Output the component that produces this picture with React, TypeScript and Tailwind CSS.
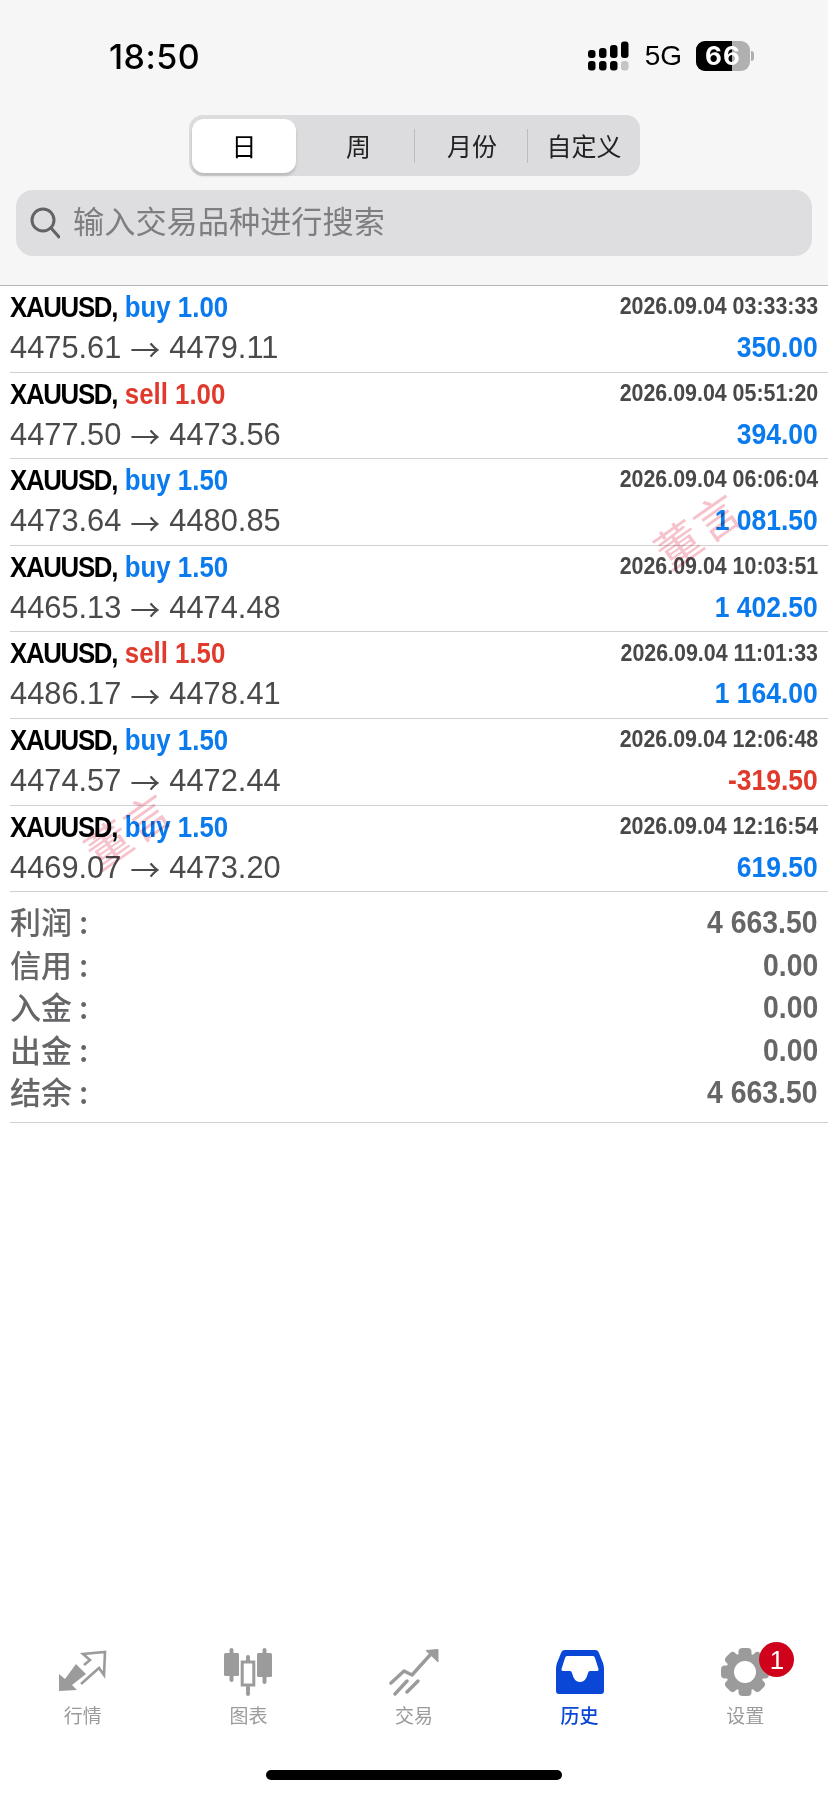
const cjk = "font-['Noto_Sans_CJK_SC','Noto_Sans',sans-serif]";
const sans = "font-['Liberation_Sans','Noto_Sans_CJK_SC',sans-serif]";

type Row = { dir: "buy" | "sell"; lot: string; time: string; from: string; to: string; profit: string };
const rows: Row[] = [
  { dir: "buy", lot: "1.00", time: "2026.09.04 03:33:33", from: "4475.61", to: "4479.11", profit: "350.00" },
  { dir: "sell", lot: "1.00", time: "2026.09.04 05:51:20", from: "4477.50", to: "4473.56", profit: "394.00" },
  { dir: "buy", lot: "1.50", time: "2026.09.04 06:06:04", from: "4473.64", to: "4480.85", profit: "1 081.50" },
  { dir: "buy", lot: "1.50", time: "2026.09.04 10:03:51", from: "4465.13", to: "4474.48", profit: "1 402.50" },
  { dir: "sell", lot: "1.50", time: "2026.09.04 11:01:33", from: "4486.17", to: "4478.41", profit: "1 164.00" },
  { dir: "buy", lot: "1.50", time: "2026.09.04 12:06:48", from: "4474.57", to: "4472.44", profit: "-319.50" },
  { dir: "buy", lot: "1.50", time: "2026.09.04 12:16:54", from: "4469.07", to: "4473.20", profit: "619.50" },
];
const summary = [
  ["利润", "4 663.50"],
  ["信用", "0.00"],
  ["入金", "0.00"],
  ["出金", "0.00"],
  ["结余", "4 663.50"],
];

function Signal() {
  const xs = [0, 11, 22, 33];
  return (
    <svg width="42" height="30" viewBox="0 0 42 30">
      {xs.map((x, i) => (
        <rect key={i} x={x} y={20} width="7.5" height="9.5" rx="3" fill={i === 3 ? "#c4c4c4" : "#000"} />
      ))}
      <rect x="0" y="9" width="7.5" height="8" rx="3" fill="#000" />
      <rect x="11" y="7" width="7.5" height="10" rx="3" fill="#000" />
      <rect x="22" y="4" width="7.5" height="13" rx="3" fill="#000" />
      <rect x="33" y="0.5" width="7.5" height="16.5" rx="3" fill="#000" />
    </svg>
  );
}

function Battery() {
  return (
    <div className="relative flex h-[30px] w-[54px] items-center justify-center overflow-hidden rounded-[9px] bg-[#b0b0b0]">
      <div className="absolute inset-y-0 left-0 w-[36px] bg-black" />
      <span className="relative text-[26px] font-bold leading-none tracking-[1px] text-white font-['Inter',sans-serif]">66</span>
    </div>
  );
}

function MarketIcon() {
  return (
    <svg width="48" height="44" viewBox="9 10 48 44">
      <path d="M9 51 L9 34 L15 39 L26 24 L36 34 L22 45 L27 50 Z" fill="#9b9b9b" />
      <path d="M34 25 L40 20 L33 14 L55 12 L54 35 L49 28 L31 44" fill="none" stroke="#9b9b9b" strokeWidth="2.6" />
    </svg>
  );
}

function CandleIcon() {
  return (
    <svg width="48" height="48" viewBox="0 0 48 48">
      <rect x="5.5" y="0" width="4" height="34" rx="2" fill="#9b9b9b" />
      <rect x="0" y="5" width="15" height="23" rx="1.5" fill="#9b9b9b" />
      <rect x="38.5" y="0" width="4" height="36" rx="2" fill="#9b9b9b" />
      <rect x="33" y="5" width="15" height="24" rx="1.5" fill="#9b9b9b" />
      <rect x="22" y="7" width="4" height="41" rx="2" fill="#9b9b9b" />
      <rect x="18.2" y="14" width="11.6" height="23" fill="#fff" stroke="#9b9b9b" strokeWidth="3" />
    </svg>
  );
}

function TradeIcon() {
  return (
    <svg width="50" height="48" viewBox="9 6 50 48">
      <path d="M11 41 L24 29 L32 33 L50 13" fill="none" stroke="#9b9b9b" strokeWidth="3.4" strokeLinecap="round" strokeLinejoin="round" />
      <path d="M15 52 L27 39 M27 50 L38 39" fill="none" stroke="#9b9b9b" strokeWidth="3.4" strokeLinecap="round" />
      <path d="M46 8.5 L58 7.5 L58 20 Z" fill="#9b9b9b" stroke="#9b9b9b" strokeLinejoin="round" />
    </svg>
  );
}

function HistoryIcon() {
  return (
    <svg width="48" height="44" viewBox="0 0 48 44">
      <path
        d="M9 0 H39 Q42 0 43 3 L47 13 Q48 16 48 19 V41 Q48 44 45 44 H3 Q0 44 0 41 V19 Q0 16 1 13 L5 3 Q6 0 9 0 Z M11 6 Q9.5 6 9 8 L5.5 19 Q5 21 7 21 H14 Q15.5 21 16 23 Q18 32 24 32 Q30 32 32 23 Q32.5 21 34 21 H41 Q43 21 42.5 19 L39 8 Q38.5 6 37 6 Z"
        fill="#0a47d6"
        fillRule="evenodd"
      />
    </svg>
  );
}

function GearIcon() {
  const teeth = [0, 45, 90, 135, 180, 225, 270, 315];
  return (
    <svg width="48" height="48" viewBox="0 0 48 48">
      {teeth.map((a) => (
        <rect key={a} x="17.5" y="0" width="13" height="12" rx="4" fill="#9b9b9b" transform={`rotate(${a} 24 24)`} />
      ))}
      <circle cx="24" cy="24" r="19" fill="#9b9b9b" />
      <circle cx="24" cy="24" r="11" fill="#fff" />
    </svg>
  );
}

function Tab({ label, active, children }: { label: string; active?: boolean; children: React.ReactNode }) {
  return (
    <div className="relative flex flex-col items-center">
      <div className="flex h-[48px] items-center justify-center">{children}</div>
      <span className={`mt-[7px] text-[19px] leading-[24px] ${cjk} ${active ? "font-medium text-[#0a47d6]" : "text-[#9b9b9b]"}`}>{label}</span>
    </div>
  );
}

export default function App() {
  return (
    <div className="relative flex h-[1795px] w-[828px] flex-col overflow-hidden bg-white">
      <header className="flex h-[286px] flex-col border-b border-[#b4b4b4] bg-[#f6f6f6]">
        <div className="flex h-[115px] items-start justify-between pl-[109px] pr-[74px] pt-[41px]">
          <span className="text-[34px] font-medium leading-[32px] tracking-[0.5px] text-black font-['Inter',sans-serif]">18:50</span>
          <div className="flex items-center">
            <Signal />
            <span className="ml-[15px] text-[28px] leading-[30px] text-black font-['Liberation_Sans',sans-serif]">5G</span>
            <div className="ml-[14px]"><Battery /></div>
            <div className="ml-[1px] h-[10px] w-[3px] rounded-r-full bg-[#b0b0b0]" />
          </div>
        </div>
        <div className="ml-[1px] flex h-[61px] w-[451px] items-center self-center rounded-[14px] bg-[#dcdcde] p-[3px]">
          <div className={`flex h-[54px] w-[104px] items-center justify-center rounded-[12px] bg-white text-[25px] text-black shadow-[0_3px_3px_rgba(0,0,0,0.15)] ${cjk}`}>日</div>
          <div className={`flex h-full w-[118px] items-center justify-center pl-[7px] text-[25px] text-[#222] ${cjk}`}>周</div>
          <div className={`flex h-[34px] w-[114px] items-center justify-center border-x border-[#bcbcbe] pl-[2px] text-[25px] text-[#222] ${cjk}`}>月份</div>
          <div className={`flex h-full flex-1 items-center justify-center pl-[3px] text-[25px] text-[#222] ${cjk}`}>自定义</div>
        </div>
        <div className="mx-[16px] mt-[14px] flex h-[66px] items-center rounded-[17px] bg-[#dedee0] pl-[14px]">
          <svg width="30" height="32" viewBox="0 0 30 32" fill="none" stroke="#636366" strokeWidth="3">
            <circle cx="13" cy="13" r="11" />
            <path d="M21 21 L29 30" strokeLinecap="round" />
          </svg>
          <span className={`ml-[13px] pb-[6px] text-[31.2px] leading-none text-[#7e7e80] ${cjk}`}>输入交易品种进行搜索</span>
        </div>
      </header>

      <div className="flex flex-col pl-[10px]">
        {rows.map((r) => (
          <div key={r.time} className="flex h-[86.6px] flex-col border-b border-[#d0d0d0] pr-[10px]">
            <div className={`mt-[3px] flex h-[36px] items-center justify-between ${sans}`}>
              <span className="origin-left scale-x-[0.86] whitespace-nowrap text-[30px] font-bold leading-none">
                <span className="tracking-[-1.5px] text-black">XAUUSD,</span>
                <span className={`ml-[9px] ${r.dir === "buy" ? "text-[#0a7aef]" : "text-[#e03a2c]"}`}>{r.dir} {r.lot}</span>
              </span>
              <span className="origin-right scale-x-[0.91] whitespace-nowrap text-[23.5px] font-bold leading-none text-[#48484a]">{r.time}</span>
            </div>
            <div className={`mt-[4px] flex h-[36px] items-center justify-between ${sans}`}>
              <span className="flex items-center whitespace-nowrap pt-[3px] text-[30.8px] leading-none text-[#4a4a4a]">
                <span>{r.from}</span>
                <span className={`mx-[9px] text-[30px] leading-none ${cjk}`}>→</span>
                <span>{r.to}</span>
              </span>
              <span className={`origin-right scale-x-[0.883] whitespace-nowrap text-[30px] font-bold leading-none ${r.profit.startsWith("-") ? "text-[#e03a2c]" : "text-[#0a7aef]"}`}>{r.profit}</span>
            </div>
          </div>
        ))}
        <div className="flex flex-col border-b border-[#d0d0d0] pb-[9px] pr-[10px] pt-[9px]">
          {summary.map(([k, v]) => (
            <div key={k} className="flex h-[42.4px] items-center justify-between">
              <span className={`pb-[3px] text-[31px] font-medium leading-none text-[#666668] ${cjk}`}>{k}<span className="ml-[7px]">:</span></span>
              <span className={`origin-right scale-x-[0.887] whitespace-nowrap text-[32px] font-bold leading-none text-[#666668] ${sans}`}>{v}</span>
            </div>
          ))}
        </div>
      </div>

      <div className="mt-auto flex flex-col items-center">
        <div className="grid w-full grid-cols-5">
          <Tab label="行情"><MarketIcon /></Tab>
          <Tab label="图表"><CandleIcon /></Tab>
          <Tab label="交易"><TradeIcon /></Tab>
          <Tab label="历史" active><HistoryIcon /></Tab>
          <Tab label="设置">
            <GearIcon />
            <div className="absolute left-[97px] top-[-6px] flex h-[35px] w-[35px] items-center justify-center rounded-full bg-[#d0021b] text-[26px] leading-none text-white font-['Liberation_Sans',sans-serif]">1</div>
          </Tab>
        </div>
        <div className="mb-[15px] mt-[43px] h-[10px] w-[296px] rounded-full bg-black" />
      </div>

      <div className={`pointer-events-none absolute left-[650px] top-[506px] -rotate-[35deg] text-[45px] leading-none tracking-[2px] text-[#f6c2cb] mix-blend-multiply ${cjk}`}>董言</div>
      <div className={`pointer-events-none absolute left-[80px] top-[806px] -rotate-[35deg] text-[45px] leading-none tracking-[2px] text-[#f6c2cb] mix-blend-multiply ${cjk}`}>董言</div>
    </div>
  );
}
